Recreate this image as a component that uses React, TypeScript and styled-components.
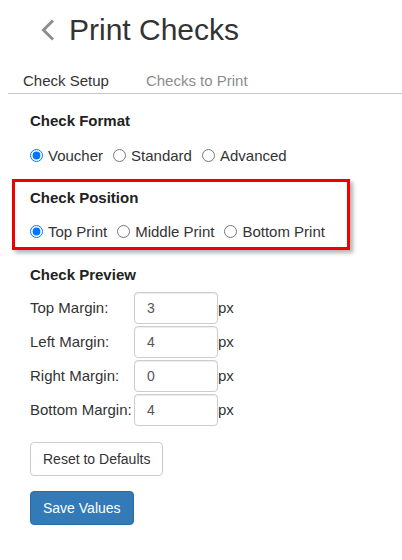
import React from "react";
import styled, { createGlobalStyle } from "styled-components";

const GlobalStyle = createGlobalStyle`
  html, body { margin: 0; padding: 0; background: #fff; }
  body { padding: 0 0 0 8px; font-family: "Liberation Sans", Arial, sans-serif; color: #333; }
`;

const Page = styled.div`
  display: flex;
  flex-direction: column;
  width: 394px;
`;

const TitleRow = styled.div`
  display: flex;
  align-items: center;
  gap: 13px;
  padding: 12px 0 0 32px;
  height: 36px;
`;

const Title = styled.h1`
  margin: 0;
  font-size: 30px;
  line-height: 36px;
  font-weight: normal;
  color: #333;
`;

const Tabs = styled.div`
  display: flex;
  gap: 37px;
  margin-top: 23px;
  padding: 0 0 2px 15px;
  border-bottom: 1px solid #c6c6c6;
`;

const Tab = styled.div<{ $active?: boolean }>`
  font-size: 15px;
  line-height: 20px;
  color: ${(p) => (p.$active ? "#333" : "#8c8c8c")};
`;

const Content = styled.div`
  display: flex;
  flex-direction: column;
  padding: 0 0 0 22px;
`;

const Section = styled.div<{ $top: number }>`
  display: flex;
  flex-direction: column;
  margin-top: ${(p) => p.$top}px;
`;

const Highlight = styled.div`
  display: flex;
  flex-direction: column;
  margin: 13px 0 0 -18px;
  width: 338px;
  box-sizing: border-box;
  border: 3px solid #ee0000;
  padding: 6px 0 5px 15px;
  box-shadow: 3px 3px 4px rgba(0, 0, 0, 0.3);
`;

const Heading = styled.div`
  font-size: 15px;
  line-height: 20px;
  font-weight: bold;
  color: #222;
`;

const RadioGroup = styled.div<{ $top: number }>`
  display: flex;
  align-items: center;
  gap: 10px;
  margin-top: ${(p) => p.$top}px;
`;

const RadioLabel = styled.label`
  display: flex;
  align-items: center;
  gap: 5px;
  font-size: 15px;
  line-height: 20px;
  color: #333;
`;

const Radio = styled.input`
  width: 13px;
  height: 13px;
  margin: 0;
  position: relative;
  top: -0.5px;
`;

const FieldList = styled.div`
  display: flex;
  flex-direction: column;
  gap: 2px;
  margin-top: 7px;
`;

const FieldRow = styled.div`
  display: flex;
  align-items: center;
  height: 32px;
`;

const FieldLabel = styled.label`
  width: 104px;
  font-size: 15px;
  line-height: 20px;
  color: #333;
  white-space: nowrap;
`;

const NumberInput = styled.input`
  width: 84px;
  height: 32px;
  box-sizing: border-box;
  margin: 0;
  padding: 6px 12px;
  border: 1px solid #ccc;
  border-radius: 4px;
  box-shadow: inset 0 1px 1px rgba(0, 0, 0, 0.075);
  font-family: "Liberation Sans", Arial, sans-serif;
  font-size: 14px;
  color: #555;
  outline: none;
`;

const Unit = styled.span`
  font-size: 15px;
  line-height: 20px;
  color: #333;
`;

const Button = styled.button<{ $primary?: boolean }>`
  align-self: flex-start;
  height: 34px;
  box-sizing: border-box;
  padding: 6px 12px;
  border-radius: 4px;
  font-family: "Liberation Sans", Arial, sans-serif;
  font-size: 14px;
  line-height: 20px;
  cursor: pointer;
  border: 1px solid ${(p) => (p.$primary ? "#2e6da4" : "#ccc")};
  background: ${(p) => (p.$primary ? "#337ab7" : "#fff")};
  color: ${(p) => (p.$primary ? "#fff" : "#333")};
`;

const ButtonGap = styled.div<{ $h: number }>`
  height: ${(p) => p.$h}px;
`;

const BackIcon = () => (
  <svg width="16" height="24" viewBox="0 0 16 24">
    <path d="M13 2.5 L3.5 12 L13 21.5" fill="none" stroke="#8e8e8e" strokeWidth="3" />
  </svg>
);

const margins = [
  { label: "Top Margin:", value: "3" },
  { label: "Left Margin:", value: "4" },
  { label: "Right Margin:", value: "0" },
  { label: "Bottom Margin:", value: "4" },
];

export default function App() {
  return (
    <>
      <GlobalStyle />
      <Page>
        <TitleRow>
          <BackIcon />
          <Title>Print Checks</Title>
        </TitleRow>
        <Tabs>
          <Tab $active>Check Setup</Tab>
          <Tab>Checks to Print</Tab>
        </Tabs>
        <Content>
          <Section $top={17}>
            <Heading>Check Format</Heading>
            <RadioGroup $top={15}>
              <RadioLabel><Radio type="radio" name="fmt" defaultChecked />Voucher</RadioLabel>
              <RadioLabel><Radio type="radio" name="fmt" />Standard</RadioLabel>
              <RadioLabel><Radio type="radio" name="fmt" />Advanced</RadioLabel>
            </RadioGroup>
          </Section>
          <Highlight>
            <Heading>Check Position</Heading>
            <RadioGroup $top={14}>
              <RadioLabel><Radio type="radio" name="pos" defaultChecked />Top Print</RadioLabel>
              <RadioLabel><Radio type="radio" name="pos" />Middle Print</RadioLabel>
              <RadioLabel><Radio type="radio" name="pos" />Bottom Print</RadioLabel>
            </RadioGroup>
          </Highlight>
          <Section $top={15}>
            <Heading>Check Preview</Heading>
            <FieldList>
              {margins.map((m) => (
                <FieldRow key={m.label}>
                  <FieldLabel>{m.label}</FieldLabel>
                  <NumberInput defaultValue={m.value} />
                  <Unit>px</Unit>
                </FieldRow>
              ))}
            </FieldList>
          </Section>
          <ButtonGap $h={16} />
          <Button>Reset to Defaults</Button>
          <ButtonGap $h={15} />
          <Button $primary>Save Values</Button>
        </Content>
      </Page>
    </>
  );
}
